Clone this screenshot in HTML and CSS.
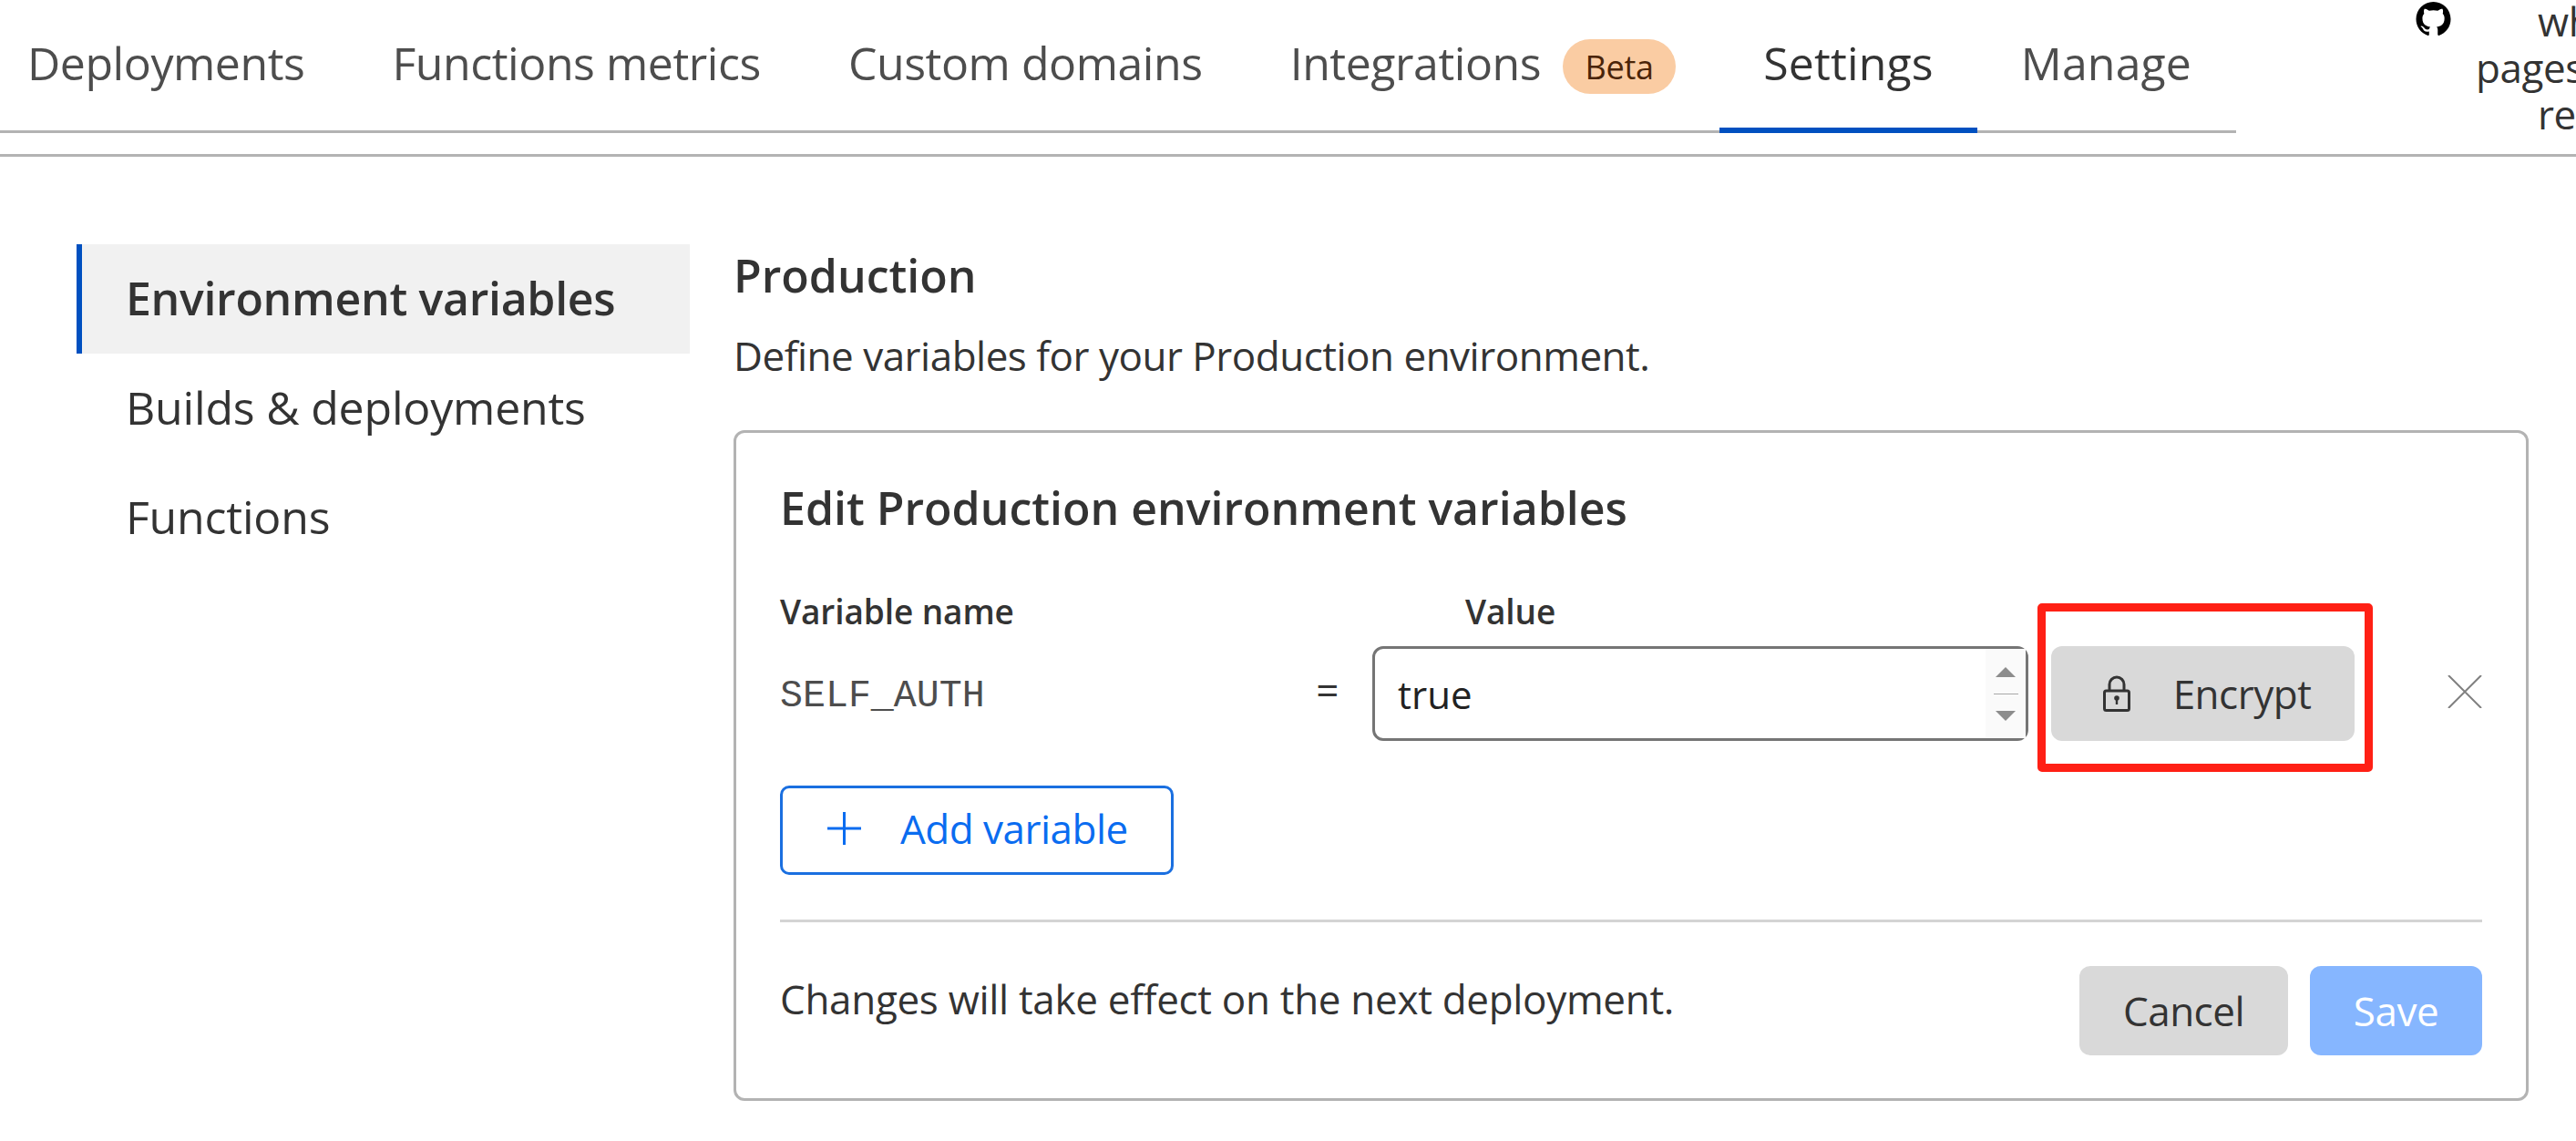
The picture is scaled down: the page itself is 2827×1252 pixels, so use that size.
FILE: index.html
```html
<!DOCTYPE html>
<html lang="en">
<head>
<meta charset="utf-8">
<title>Settings</title>
<link rel="stylesheet" href="styles.css">
</head>
<body>
<header class="header">
  <nav class="tabs">
    <a class="tab tab-first">Deployments</a>
    <a class="tab">Functions metrics</a>
    <a class="tab">Custom domains</a>
    <a class="tab tab-badge">Integrations<span class="beta">Beta</span></a>
    <a class="tab tab-wide tab-active">Settings</a>
    <a class="tab tab-wide">Manage</a>
  </nav>
  <div class="repo">
    <svg class="gh" viewBox="0 0 16 16" aria-hidden="true"><path fill="#000" d="M8 0C3.58 0 0 3.58 0 8c0 3.54 2.29 6.53 5.47 7.59.4.07.55-.17.55-.38 0-.19-.01-.82-.01-1.49-2.01.37-2.53-.49-2.69-.94-.09-.23-.48-.94-.82-1.13-.28-.15-.68-.52-.01-.53.63-.01 1.08.58 1.23.82.72 1.21 1.87.87 2.33.66.07-.52.28-.87.51-1.07-1.78-.2-3.64-.89-3.64-3.95 0-.87.31-1.59.82-2.15-.08-.2-.36-1.02.08-2.12 0 0 .67-.21 2.2.82.64-.18 1.32-.27 2-.27s1.36.09 2 .27c1.53-1.04 2.2-.82 2.2-.82.44 1.1.16 1.92.08 2.12.51.56.82 1.27.82 2.15 0 3.07-1.87 3.75-3.65 3.95.29.25.54.73.54 1.48 0 1.07-.01 1.93-.01 2.2 0 .21.15.46.55.38A8.01 8.01 0 0 0 16 8c0-4.42-3.58-8-8-8z"/></svg>
    <div class="repo-text">
      <div class="repo-line repo-indent">wh</div>
      <div class="repo-line">pages</div>
      <div class="repo-line repo-indent">re</div>
    </div>
  </div>
</header>
<main class="main">
  <aside class="side">
    <a class="side-item side-active">Environment variables</a>
    <a class="side-item">Builds &amp; deployments</a>
    <a class="side-item">Functions</a>
  </aside>
  <section class="content">
    <h2 class="title">Production</h2>
    <p class="desc">Define variables for your Production environment.</p>
    <div class="card">
      <h3 class="card-title">Edit Production environment variables</h3>
      <div class="labels">
        <span class="label label-name">Variable name</span>
        <span class="label">Value</span>
      </div>
      <div class="row">
        <span class="var-name">SELF_AUTH</span>
        <span class="eq">=</span>
        <div class="input">
          <span class="input-text">true</span>
          <div class="spin">
            <span class="tri-up"></span>
            <span class="spin-line"></span>
            <span class="tri-down"></span>
          </div>
        </div>
        <div class="encrypt-wrap">
          <button class="btn btn-encrypt">
            <svg class="lock" viewBox="0 0 30 40" aria-hidden="true"><path d="M7 17V10a8 8 0 0 1 16 0v7" fill="none" stroke="#333" stroke-width="3"/><rect x="1.5" y="17" width="27" height="21.5" rx="2" fill="none" stroke="#333" stroke-width="3"/><circle cx="15" cy="25" r="2.8" fill="#333"/><rect x="13.8" y="25" width="2.4" height="7" fill="#333"/></svg>
            <span>Encrypt</span>
          </button>
        </div>
        <svg class="close" viewBox="0 0 38 36" aria-hidden="true"><path d="M1 0L37 36M37 0L1 36" stroke="#808080" stroke-width="2" fill="none"/></svg>
      </div>
      <button class="btn-add">
        <svg class="plus" viewBox="0 0 37 36" aria-hidden="true"><path d="M18.5 0V36M0 18H37" stroke="#0a6cf0" stroke-width="3" fill="none"/></svg>
        <span>Add variable</span>
      </button>
      <hr class="rule">
      <div class="foot">
        <span class="foot-text">Changes will take effect on the next deployment.</span>
        <div class="foot-btns">
          <button class="btn btn-cancel">Cancel</button>
          <button class="btn btn-save">Save</button>
        </div>
      </div>
    </div>
  </section>
</main>
</body>
</html>
```
FILE: styles.css
```css
* { box-sizing: border-box; }
html, body { margin: 0; padding: 0; }
body {
  width: 2827px;
  height: 1252px;
  overflow: hidden;
  background: #fff;
  color: #333;
  font-family: "Open Sans", "Noto Sans", sans-serif;
}
.header {
  display: flex;
  height: 172px;
  border-bottom: 3px solid #b3b3b3;
}
.tabs {
  display: flex;
  flex: none;
  width: 2454px;
  height: 146px;
  border-bottom: 3px solid #b3b3b3;
}
.tab {
  display: flex;
  align-items: center;
  height: 146px;
  padding: 0 48px 8px;
  font-size: 50px;
  letter-spacing: -0.45px;
  color: #4d4d4d;
  white-space: nowrap;
}
.tab-first { padding-left: 30px; }
.tab-wide { letter-spacing: 0.15px; }
.tab-active {
  color: #333;
  border-bottom: 6px solid #0050c0;
  padding-bottom: 2px;
}
.beta {
  display: flex;
  align-items: center;
  justify-content: center;
  width: 124px;
  height: 60px;
  margin-left: 24px;
  margin-top: 8px;
  border-radius: 30px;
  background: #facca3;
  color: #4a2408;
  font-size: 36px;
  letter-spacing: -0.2px;
}
.repo {
  display: flex;
  flex: none;
  align-items: flex-start;
  margin-left: 197px;
  padding-top: 2px;
}
.gh { width: 39px; height: 38px; flex: none; }
.repo-text {
  margin-left: 27px;
  font-size: 44px;
  line-height: 51px;
  letter-spacing: -0.4px;
  margin-top: -4px;
}
.repo-indent { padding-left: 68px; }
.main {
  display: flex;
  padding: 96px 0 0 84px;
}
.side { width: 673px; flex: none; }
.side-item {
  display: flex;
  align-items: center;
  height: 120px;
  padding: 0 0 3px 54px;
  font-size: 50px;
  letter-spacing: -0.2px;
  color: #333;
}
.side-active {
  padding-left: 48px;
  border-left: 6px solid #0050c0;
  background: #f1f1f1;
  font-weight: 600;
  letter-spacing: -0.3px;
}
.content { margin-left: 48px; width: 1970px; }
.title {
  margin: 0;
  font-size: 50px;
  line-height: 68px;
  font-weight: 600;
}
.desc {
  margin: 24px 0 0;
  font-size: 44px;
  line-height: 60px;
  letter-spacing: -0.5px;
}
.card {
  margin-top: 52px;
  height: 736px;
  padding: 52px 48px 0 48px;
  border: 3px solid #b3b3b3;
  border-radius: 12px;
}
.card-title {
  margin: 0;
  font-size: 50px;
  line-height: 60px;
  font-weight: 600;
}
.labels {
  display: flex;
  margin-top: 60px;
  height: 46px;
  align-items: center;
}
.label { font-size: 37px; font-weight: 600; letter-spacing: -0.1px; }
.label-name { width: 752px; }
.row {
  display: flex;
  align-items: center;
  height: 104px;
  margin-top: 16px;
}
.var-name {
  width: 589px;
  padding-top: 4px;
  font-family: "Liberation Mono", monospace;
  font-size: 41.6px;
  color: #4d4d4d;
}
.eq { width: 62px; font-size: 44px; margin-top: -8px; }
.input {
  display: flex;
  align-items: center;
  justify-content: space-between;
  width: 721px;
  height: 104px;
  padding-left: 25px;
  border: 3px solid #757575;
  border-radius: 12px;
}
.input-text { font-size: 42px; color: #222; }
.spin {
  display: flex;
  flex-direction: column;
  align-items: center;
  justify-content: center;
  width: 44px;
  height: 98px;
  background: #fafafa;
}
.tri-up, .tri-down {
  width: 0;
  height: 0;
  border-left: 11px solid transparent;
  border-right: 11px solid transparent;
}
.tri-up { border-bottom: 11px solid #8c8c8c; }
.tri-down { border-top: 11px solid #8c8c8c; }
.spin-line { width: 27px; height: 1px; margin: 18px 0; background: #a8a8a8; }
.encrypt-wrap {
  position: relative;
  margin-left: 25px;
}
.encrypt-wrap::after {
  content: "";
  position: absolute;
  top: -47px;
  right: -20px;
  bottom: -34px;
  left: -15px;
  border: 9px solid #ff2015;
  border-radius: 5px;
  pointer-events: none;
}
.btn {
  display: flex;
  align-items: center;
  justify-content: center;
  border: 0;
  border-radius: 12px;
  font-family: inherit;
  font-size: 44px;
  letter-spacing: -0.5px;
  color: #333;
  background: #d9d9d9;
}
.btn-encrypt {
  width: 333px;
  height: 104px;
  padding: 0 0 0 9px;
}
.lock { width: 30px; height: 40px; margin-right: 47px; }
.close { width: 38px; height: 36px; margin-left: 102px; margin-top: -4px; flex: none; }
.btn-add {
  display: flex;
  align-items: center;
  width: 432px;
  height: 98px;
  margin-top: 49px;
  padding: 0 0 4px 49px;
  border: 3px solid #1a6fe0;
  border-radius: 10px;
  background: #fff;
  color: #0a6cf0;
  font-family: inherit;
  font-size: 44px;
  letter-spacing: -0.5px;
}
.plus { width: 37px; height: 36px; margin-right: 43px; flex: none; }
.rule {
  margin: 49px 0 0;
  height: 3px;
  border: 0;
  background: #d4d4d4;
}
.foot {
  display: flex;
  justify-content: space-between;
  align-items: flex-start;
  padding-top: 48px;
}
.foot-text {
  margin-top: 6px;
  font-size: 44px;
  line-height: 60px;
  letter-spacing: -0.31px;
}
.foot-btns { display: flex; gap: 24px; }
.btn-cancel { width: 229px; height: 98px; }
.btn-save { width: 189px; height: 98px; background: #86b6ff; color: #fff; }
```
